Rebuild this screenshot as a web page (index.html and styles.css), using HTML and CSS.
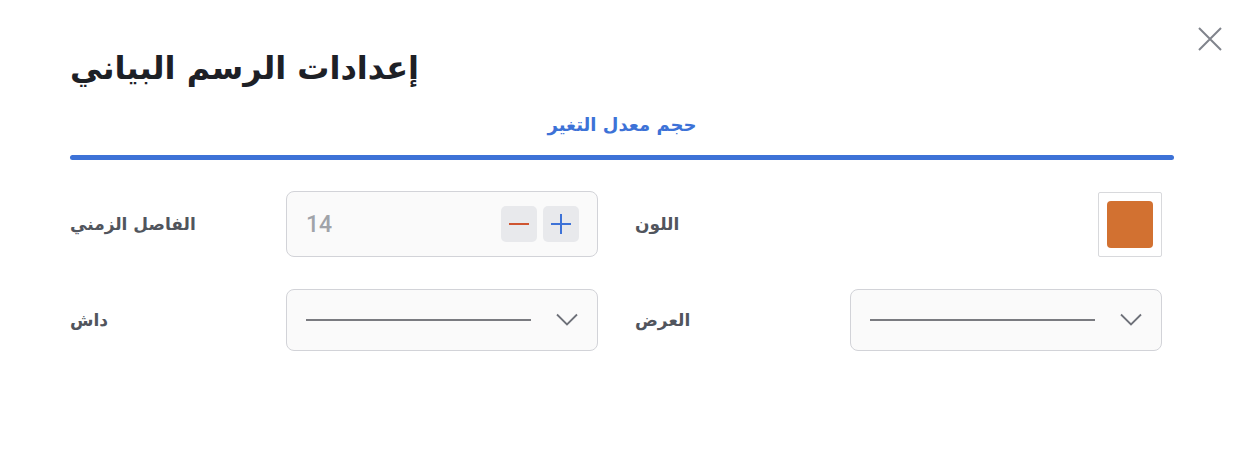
FILE: index.html
```html
<!DOCTYPE html>
<html lang="ar">
<head>
<meta charset="utf-8">
<link rel="stylesheet" href="styles.css">
</head>
<body>
<div class="dialog">
  <button class="close" aria-label="close">
    <svg width="26" height="26" viewBox="0 0 26 26"><path d="M2 2L24 24M24 2L2 24" stroke="#80848c" stroke-width="2" fill="none"/></svg>
  </button>
  <h1 class="title">إعدادات الرسم البياني</h1>
  <div class="tabs">
    <div class="tab">حجم معدل التغير</div>
    <div class="tab-bar"></div>
  </div>
  <div class="grid">
    <div class="cell">
      <span class="label">الفاصل الزمني</span>
      <div class="field number">
        <span class="value">14</span>
        <div class="steppers">
          <span class="step minus"><svg width="20" height="20" viewBox="0 0 20 20"><path d="M0 10H20" stroke="#cf5531" stroke-width="2"/></svg></span>
          <span class="step plus"><svg width="20" height="20" viewBox="0 0 20 20"><path d="M0 10H20M10 0V20" stroke="#3d72d7" stroke-width="2"/></svg></span>
        </div>
      </div>
    </div>
    <div class="cell">
      <span class="label">اللون</span>
      <div class="swatch"><div class="swatch-fill"></div></div>
    </div>
    <div class="cell">
      <span class="label">داش</span>
      <div class="field select">
        <span class="line"></span>
        <svg width="22" height="14" viewBox="0 0 22 14"><path d="M1 1.5L11 11.5L21 1.5" stroke="#6e7179" stroke-width="1.8" fill="none"/></svg>
      </div>
    </div>
    <div class="cell">
      <span class="label">العرض</span>
      <div class="field select">
        <span class="line"></span>
        <svg width="22" height="14" viewBox="0 0 22 14"><path d="M1 1.5L11 11.5L21 1.5" stroke="#6e7179" stroke-width="1.8" fill="none"/></svg>
      </div>
    </div>
  </div>
</div>
</body>
</html>
```
FILE: styles.css
```css
* { box-sizing: border-box; }
html, body { margin: 0; background: #fff; }
body {
  font-family: "DejaVu Sans", "Noto Sans Arabic", sans-serif;
  width: 1246px;
  height: 458px;
  overflow: hidden;
}
.dialog {
  position: relative;
  padding: 42px 72px 0 70px;
}
.close {
  position: absolute;
  top: 25px;
  right: 22px;
  width: 28px;
  height: 28px;
  padding: 0;
  border: 0;
  background: none;
  display: flex;
  align-items: center;
  justify-content: center;
}
.title {
  margin: 0;
  font-size: 32px;
  line-height: 52px;
  font-weight: 700;
  color: #1d2026;
}
.tabs {
  margin-top: 17px;
}
.tab {
  text-align: center;
  color: #3d72d7;
  font-weight: 700;
  font-size: 18px;
  line-height: 28px;
}
.tab-bar {
  margin-top: 16px;
  height: 5px;
  border-radius: 3px;
  background: #3d72d7;
}
.grid {
  margin-top: 31px;
  width: 1092px;
  display: grid;
  grid-template-columns: 528px 527px;
  column-gap: 37px;
  row-gap: 32px;
}
.cell {
  display: flex;
  align-items: center;
  justify-content: space-between;
}
.label {
  font-size: 17px;
  font-weight: 700;
  color: #51555d;
}
.field {
  width: 312px;
  border: 1px solid #d2d3d8;
  border-radius: 8px;
  background: #fafafa;
  display: flex;
  align-items: center;
  justify-content: space-between;
  padding: 0 18px 0 19px;
}
.number { height: 66px; }
.value {
  font-family: Roboto, "Liberation Sans", sans-serif;
  font-size: 23px;
  font-weight: 500;
  color: #a0a3a9;
}
.steppers { display: flex; gap: 6px; }
.step {
  width: 36px;
  height: 36px;
  border-radius: 5px;
  background: #e8e9ec;
  display: flex;
  align-items: center;
  justify-content: center;
}
.swatch {
  width: 64px;
  height: 65px;
  border: 1px solid #d8d9dc;
  border-radius: 2px;
  padding: 8px;
}
.swatch-fill {
  width: 100%;
  height: 100%;
  border-radius: 4px;
  background: #d27131;
}
.select { height: 62px; padding-right: 19px; }
.line {
  width: 225px;
  height: 2px;
  background: #7a7b80;
}
```
